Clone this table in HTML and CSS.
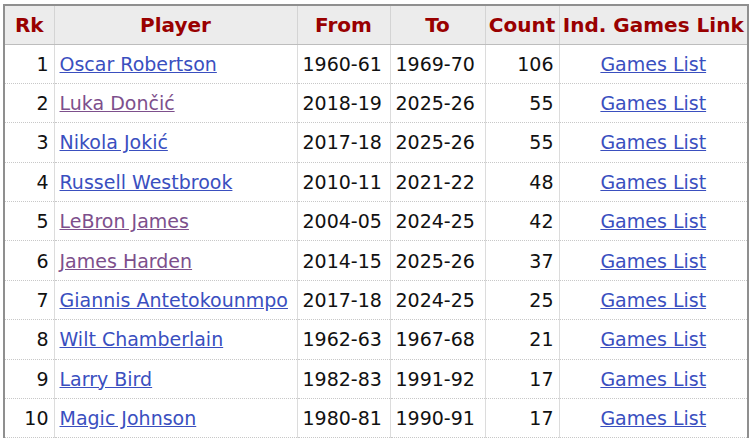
FILE: index.html
```html
<!DOCTYPE html>
<html lang="en">
<head>
  <meta charset="UTF-8" />
  <title>Triple-Doubles</title>
  <link rel="stylesheet" href="styles.css">
</head>
<body>
  <table class="stats">
    <thead>
      <tr>
        <th class="rk">Rk</th>
        <th class="player">Player</th>
        <th class="from">From</th>
        <th class="to">To</th>
        <th class="count">Count</th>
        <th class="link">Ind. Games Link</th>
      </tr>
    </thead>
    <tbody>
      <tr><td class="num">1</td><td><a href="#">Oscar Robertson</a></td><td>1960-61</td><td>1969-70</td><td class="num">106</td><td class="center"><a href="#">Games List</a></td></tr>
      <tr><td class="num">2</td><td><a href="#" class="visited">Luka Dončić</a></td><td>2018-19</td><td>2025-26</td><td class="num">55</td><td class="center"><a href="#">Games List</a></td></tr>
      <tr><td class="num">3</td><td><a href="#">Nikola Jokić</a></td><td>2017-18</td><td>2025-26</td><td class="num">55</td><td class="center"><a href="#">Games List</a></td></tr>
      <tr><td class="num">4</td><td><a href="#">Russell Westbrook</a></td><td>2010-11</td><td>2021-22</td><td class="num">48</td><td class="center"><a href="#">Games List</a></td></tr>
      <tr><td class="num">5</td><td><a href="#" class="visited">LeBron James</a></td><td>2004-05</td><td>2024-25</td><td class="num">42</td><td class="center"><a href="#">Games List</a></td></tr>
      <tr><td class="num">6</td><td><a href="#" class="visited">James Harden</a></td><td>2014-15</td><td>2025-26</td><td class="num">37</td><td class="center"><a href="#">Games List</a></td></tr>
      <tr><td class="num">7</td><td><a href="#">Giannis Antetokounmpo</a></td><td>2017-18</td><td>2024-25</td><td class="num">25</td><td class="center"><a href="#">Games List</a></td></tr>
      <tr><td class="num">8</td><td><a href="#">Wilt Chamberlain</a></td><td>1962-63</td><td>1967-68</td><td class="num">21</td><td class="center"><a href="#">Games List</a></td></tr>
      <tr><td class="num">9</td><td><a href="#">Larry Bird</a></td><td>1982-83</td><td>1991-92</td><td class="num">17</td><td class="center"><a href="#">Games List</a></td></tr>
      <tr><td class="num">10</td><td><a href="#">Magic Johnson</a></td><td>1980-81</td><td>1990-91</td><td class="num">17</td><td class="center"><a href="#">Games List</a></td></tr>
    </tbody>
  </table>
</body>
</html>
```

FILE: styles.css
```css
* {
  margin: 0;
  padding: 0;
  box-sizing: border-box;
}

body {
  font-family: "DejaVu Sans", Verdana, sans-serif;
  font-size: 19px;
  color: #111;
  background: #fff;
  padding: 4px 0 0 3px;
}

.stats {
  width: 744px;
  table-layout: fixed;
  border-collapse: collapse;
  border: 2px solid #8f8f8f;
  border-bottom: none;
}

.stats th {
  background: #ececec;
  color: #990000;
  font-size: 20px;
  font-weight: bold;
  height: 39px;
  padding: 0 2px;
  border: 1px solid #d4d4d4;
  border-bottom: 1px solid #bdbdbd;
  text-align: center;
  white-space: nowrap;
}

.stats td {
  height: 39.4px;
  padding: 0 5px;
  border-left: 1px solid #dcdcdc;
  border-bottom: 1px dotted #c8c8c8;
  white-space: nowrap;
}

.stats th.rk { width: 50px; }
.stats th.player { width: 243px; }
.stats th.from { width: 93px; }
.stats th.to { width: 95px; }
.stats th.count { width: 74px; }
.stats th.link { width: 189px; }

.stats td.num {
  text-align: right;
}

.stats td.center {
  text-align: center;
}

.stats a {
  color: #3a4fbf;
  text-decoration: underline;
}

.stats a.visited {
  color: #7d4f8c;
}
```
